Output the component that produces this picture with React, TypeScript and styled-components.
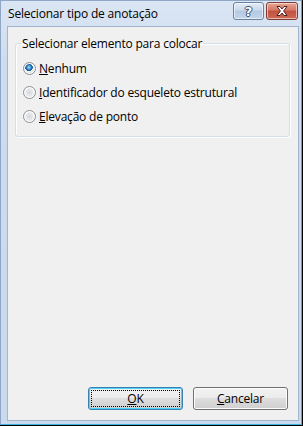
import { useState } from 'react';
import styled, { createGlobalStyle } from 'styled-components';

const GlobalStyle = createGlobalStyle`
  html, body {
    margin: 0;
    padding: 0;
    background: #000;
  }
  body {
    font-family: "Open Sans", "Noto Sans", "Liberation Sans", sans-serif;
    font-size: 12px;
    color: #000;
  }
`;

const Screen = styled.div`
  width: 303px;
  height: 426px;
  background: #000;
`;

const Window = styled.div`
  box-sizing: border-box;
  width: 302px;
  height: 425px;
  display: flex;
  flex-direction: column;
  border-left: 1px solid #8fa6c4;
  border-top: 1px solid #8fa6c4;
  border-right: 1px solid #3cb4e2;
  border-bottom: 1px solid #3cb4e2;
  background: linear-gradient(#dbe6f4, #cddcef 60px, #c9d9ee);
`;

const TitleBar = styled.div`
  height: 25px;
  display: flex;
  align-items: flex-start;
  padding: 1px 3px 0 7px;
  box-sizing: border-box;
`;

const Title = styled.div`
  flex: 1;
  line-height: 23px;
  font-size: 12px;
  white-space: nowrap;
  letter-spacing: -0.2px;
`;

const Caption = styled.div`
  display: flex;
  gap: 2px;
`;

const CaptionButton = styled.div<{ $variant: 'help' | 'close' }>`
  box-sizing: border-box;
  width: ${p => (p.$variant === 'close' ? 32 : 31)}px;
  height: 18px;
  border-radius: 3px;
  border: 1px solid ${p => (p.$variant === 'close' ? '#7d3a36' : '#6d82a0')};
  box-shadow: inset 0 0 0 1px rgba(255, 255, 255, 0.55);
  background: ${p =>
    p.$variant === 'close'
      ? 'linear-gradient(#e8a491, #d47865 45%, #c2513f 50%, #cc6a55)'
      : 'linear-gradient(#e4ecf6, #c9d8eb 45%, #b4c8e1 50%, #c4d6ec)'};
  display: flex;
  align-items: center;
  justify-content: center;
`;

const HelpGlyph = styled.span`
  font-family: "DejaVu Sans", sans-serif;
  font-weight: bold;
  font-size: 13px;
  line-height: 13px;
  color: #fff;
  text-shadow:
    1px 0 0 #3b4c64, -1px 0 0 #3b4c64, 0 1px 0 #3b4c64, 0 -1px 0 #3b4c64;
`;

const Client = styled.div`
  flex: 1;
  margin: 0 2px 3px 6px;
  border: 1px solid #a3b5cd;
  background: #f0f0f0;
  display: flex;
  flex-direction: column;
`;

const Group = styled.fieldset`
  margin: 9px 8px 0 7px;
  padding: 1px 8px 8px 7px;
  border: 1px solid #d5dfe5;
  border-radius: 3px;
  box-shadow: inset 1px 1px 0 #fff, 1px 1px 0 #fff;
`;

const Legend = styled.legend`
  padding: 0 1px;
  margin-left: -2px;
  line-height: 15px;
  letter-spacing: -0.2px;
`;

const Options = styled.div`
  display: flex;
  flex-direction: column;
  padding-top: 4px;
`;

const Option = styled.label`
  height: 24px;
  display: flex;
  align-items: center;
  gap: 3px;
  letter-spacing: -0.2px;
  cursor: default;
`;

const RadioMark = styled.span<{ $checked: boolean }>`
  box-sizing: border-box;
  width: 13px;
  height: 13px;
  border-radius: 50%;
  border: 1px solid #8b9097;
  background: ${p =>
    p.$checked
      ? 'radial-gradient(circle at 45% 40%, #b9e6fb 0, #4a9fd8 1.6px, #1a5e9c 3.2px, #1d5d93 3.6px, #f4f4f4 4px, #dfe1e4 5.5px)'
      : 'radial-gradient(circle at 50% 50%, #d9dcdf 0, #e3e5e8 3px, #f6f6f6 5.5px)'};
  box-shadow: inset 0 0 0 1px #fff;
  flex-shrink: 0;
`;

const Spacer = styled.div`
  flex: 1;
`;

const ButtonRow = styled.div`
  display: flex;
  justify-content: flex-end;
  gap: 10px;
  padding: 0 10px 10px 0;
`;

const Button = styled.button<{ $default?: boolean }>`
  box-sizing: border-box;
  width: 95px;
  height: 23px;
  padding: 0;
  font: inherit;
  letter-spacing: -0.2px;
  color: #000;
  border-radius: 3px;
  border: 1px solid ${p => (p.$default ? '#3c7fb1' : '#707070')};
  box-shadow: inset 0 0 0 1px ${p => (p.$default ? '#48d2f8' : '#fcfcfc')};
  background: linear-gradient(#f2f2f2, #ebebeb 50%, #dddddd 50%, #cfcfcf);
  position: relative;
  display: flex;
  align-items: center;
  justify-content: center;
`;

const FocusRing = styled.span`
  position: absolute;
  inset: 2px;
  border: 1px dotted #000;
`;

const options = [
  { key: 'N', rest: 'enhum' },
  { key: 'I', rest: 'dentificador do esqueleto estrutural' },
  { key: 'E', rest: 'levação de ponto' },
];

const CloseIcon = () => (
  <svg width="14" height="12" viewBox="0 0 14 12">
    <path
      d="M2 1.5 L5 1.5 L7 4 L9 1.5 L12 1.5 L8.6 6 L12 10.5 L9 10.5 L7 8 L5 10.5 L2 10.5 L5.4 6 Z"
      fill="#fff"
      stroke="#4f1f1b"
      strokeWidth="1"
      strokeLinejoin="round"
    />
  </svg>
);

export default function App() {
  const [selected, setSelected] = useState(0);

  return (
    <Screen>
      <GlobalStyle />
      <Window>
        <TitleBar>
          <Title>Selecionar tipo de anotação</Title>
          <Caption>
            <CaptionButton $variant="help"><HelpGlyph>?</HelpGlyph></CaptionButton>
            <CaptionButton $variant="close"><CloseIcon /></CaptionButton>
          </Caption>
        </TitleBar>
        <Client>
          <Group>
            <Legend>Selecionar elemento para colocar</Legend>
            <Options>
              {options.map((o, i) => (
                <Option key={o.key} onClick={() => setSelected(i)}>
                  <RadioMark $checked={selected === i} />
                  <span><u>{o.key}</u>{o.rest}</span>
                </Option>
              ))}
            </Options>
          </Group>
          <Spacer />
          <ButtonRow>
            <Button $default>
              <FocusRing />
              <span><u>O</u>K</span>
            </Button>
            <Button>
              <span><u>C</u>ancelar</span>
            </Button>
          </ButtonRow>
        </Client>
      </Window>
    </Screen>
  );
}
